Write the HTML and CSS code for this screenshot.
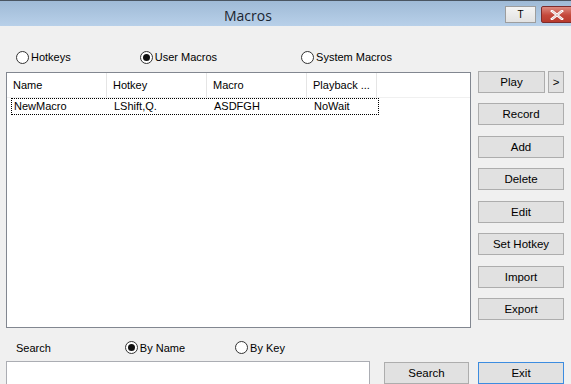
FILE: index.html
```html
<!DOCTYPE html>
<html lang="en">
<head>
    <meta charset="UTF-8">
    <title>Macros</title>
    <link rel="stylesheet" href="styles.css">
</head>
<body>
    <div class="window">
        <div class="titlebar">
            <span class="title">Macros</span>
            <div class="caption-buttons">
                <button class="cap-btn cap-pin">T</button>
                <button class="cap-btn cap-close">
                    <svg width="14" height="10" viewBox="0 0 14 10">
                        <path d="M2 1 L12 9 M12 1 L2 9" stroke="#fff" stroke-width="2.6" stroke-linecap="square"/>
                        <path d="M2 1 L12 9 M12 1 L2 9" stroke="#7a2a2a" stroke-width="0.6" fill="none" opacity="0.5"/>
                    </svg>
                </button>
            </div>
        </div>

        <div class="client">
            <div class="radio-row top-radios">
                <label class="radio r-hotkeys"><span class="dot"></span>Hotkeys</label>
                <label class="radio r-user"><span class="dot checked"></span>User Macros</label>
                <label class="radio r-system"><span class="dot"></span>System Macros</label>
            </div>
            <div class="spacer"></div>

            <div class="listbox">
                <div class="list-head">
                    <div class="col c1">Name</div>
                    <div class="col c2">Hotkey</div>
                    <div class="col c3">Macro</div>
                    <div class="col c4">Playback ...</div>
                </div>
                <div class="list-row focused">
                    <div class="col c1">NewMacro</div>
                    <div class="col c2">LShift,Q.</div>
                    <div class="col c3">ASDFGH</div>
                    <div class="col c4">NoWait</div>
                </div>
            </div>

            <div class="side-buttons">
                <div class="play-group">
                    <button class="btn btn-play">Play</button>
                    <button class="btn btn-more">&gt;</button>
                </div>
                <button class="btn">Record</button>
                <button class="btn">Add</button>
                <button class="btn">Delete</button>
                <button class="btn">Edit</button>
                <button class="btn">Set Hotkey</button>
                <button class="btn">Import</button>
                <button class="btn">Export</button>
            </div>

            <div class="radio-row search-radios">
                <span class="search-label">Search</span>
                <label class="radio r-name"><span class="dot checked"></span>By Name</label>
                <label class="radio r-key"><span class="dot"></span>By Key</label>
            </div>
            <div class="spacer"></div>

            <div class="search-row">
                <div class="search-input"></div>
                <button class="btn btn-search">Search</button>
            </div>
            <div class="exit-cell">
                <button class="btn btn-default">Exit</button>
            </div>
        </div>
    </div>
</body>
</html>
```

FILE: styles.css
```css
* {
    margin: 0;
    padding: 0;
    box-sizing: border-box;
}

body {
    width: 571px;
    height: 384px;
    overflow: hidden;
    background: #f0f0f0;
    font-family: "Liberation Sans", Arial, sans-serif;
    font-size: 11px;
    color: #000;
}

.window {
    width: 571px;
    height: 384px;
    overflow: hidden;
}

/* title bar */
.titlebar {
    height: 26px;
    display: flex;
    align-items: flex-start;
    border-top: 1px solid #4a5561;
    background: linear-gradient(#9fbad6, #b8d0e9);
}

.title {
    margin-left: 224px;
    margin-top: 5px;
    font-family: "Open Sans", "Liberation Sans", sans-serif;
    font-size: 14px;
    color: #1b2530;
}

.caption-buttons {
    margin-left: auto;
    margin-top: 5px;
    display: flex;
    gap: 5px;
}

.cap-btn {
    height: 17px;
    border: 1px solid #9d9d9d;
    font-family: "Liberation Sans", sans-serif;
}

.cap-pin {
    width: 31px;
    background: linear-gradient(#f4f4f4, #e2e2e2);
    font-size: 10px;
    line-height: 14px;
}

.cap-close {
    width: 32px;
    margin-right: -2px;
    border-color: #7d2b2b;
    border-radius: 2px;
    background: linear-gradient(#dd8a80, #c4483b 55%, #b73a2d);
    display: flex;
    align-items: center;
    justify-content: center;
}

/* client area */
.client {
    display: grid;
    grid-template-columns: 465px 86px;
    grid-template-rows: 45px 257px 33px 1fr;
    column-gap: 7px;
    padding-left: 6px;
    height: 358px;
}

.radio-row {
    display: flex;
    align-items: center;
}

.radio {
    display: flex;
    align-items: center;
    gap: 2px;
}

.dot {
    width: 13px;
    height: 13px;
    border: 1px solid #333;
    border-radius: 50%;
    background: #fff;
    display: flex;
    align-items: center;
    justify-content: center;
}

.dot.checked::after {
    content: "";
    width: 7px;
    height: 7px;
    border-radius: 50%;
    background: #111;
}

.top-radios {
    padding-top: 17px;
}

.r-hotkeys {
    margin-left: 10px;
}

.r-user {
    margin-left: 69px;
}

.r-system {
    margin-left: 84px;
}

/* list view */
.listbox {
    margin-top: 1px;
    background: #fff;
    border: 1px solid #828790;
}

.list-head,
.list-row {
    display: flex;
}

.list-head {
    height: 25px;
    border-bottom: 1px solid #f0f0f0;
}

.list-head .col {
    border-right: 1px solid #e5e5e5;
    line-height: 24px;
}

.col {
    padding-left: 6px;
    white-space: nowrap;
    overflow: hidden;
}

.c1,
.c2,
.c3 {
    width: 100px;
}

.c4 {
    width: 70px;
}

.list-row {
    width: 368px;
    height: 17px;
    margin-left: 4px;
    line-height: 15px;
    border: 1px dotted #000;
}

.list-row .c1 {
    width: 96px;
    padding-left: 2px;
}

.list-row .c4 {
    width: 66px;
}

/* side buttons */
.side-buttons {
    display: flex;
    flex-direction: column;
    justify-content: space-between;
    height: 249px;
}

.btn {
    height: 22px;
    width: 86px;
    background: #e1e1e1;
    border: 1px solid #adadad;
    font-family: "Liberation Sans", Arial, sans-serif;
    font-size: 11.5px;
    color: #000;
}

.play-group {
    display: flex;
    gap: 3px;
}

.btn-play {
    width: 67px;
}

.btn-more {
    width: 16px;
}

.search-radios {
    padding-top: 6px;
}

.search-label {
    margin-left: 10px;
}

.r-name {
    margin-left: 74px;
}

.r-key {
    margin-left: 50px;
}

.search-row {
    display: flex;
    align-items: flex-start;
    gap: 14px;
}

.search-input {
    width: 364px;
    height: 30px;
    background: #fff;
    border: 1px solid #abadb3;
}

.btn-search {
    width: 85px;
    margin-top: 1px;
}

.exit-cell {
    padding-top: 1px;
}

.btn-default {
    border-color: #3c8ce0;
}
```
